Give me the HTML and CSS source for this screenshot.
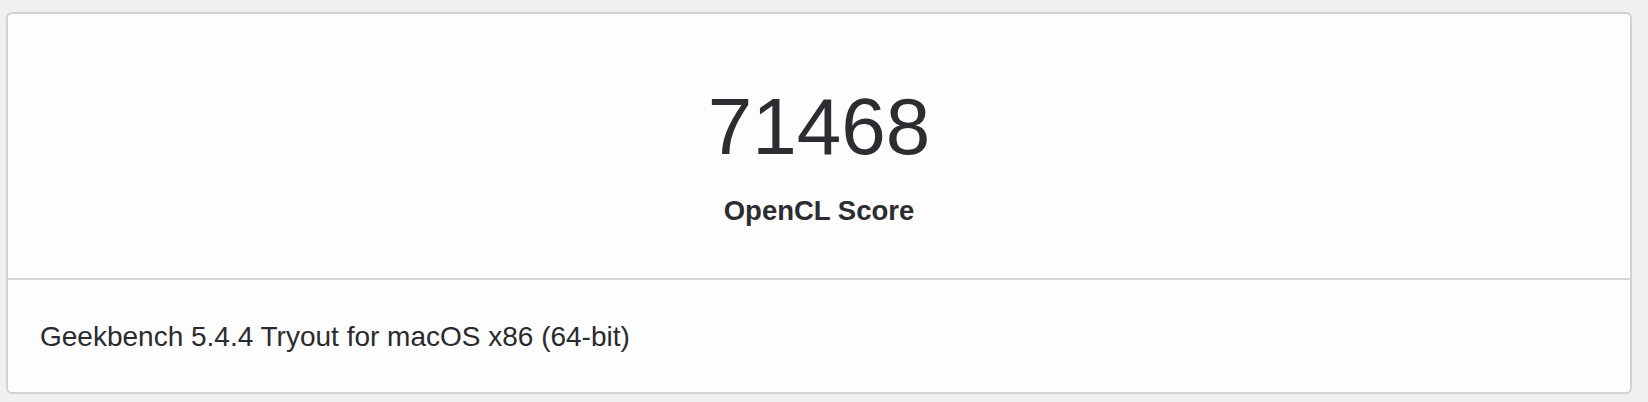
FILE: index.html
```html
<!DOCTYPE html>
<html lang="en">
<head>
<meta charset="utf-8">
<title>Geekbench OpenCL Score</title>
<link rel="stylesheet" href="styles.css">
</head>
<body>
<div class="card">
  <div class="score-section">
    <div class="score">71468</div>
    <div class="score-label">OpenCL Score</div>
  </div>
  <div class="footer">Geekbench 5.4.4 Tryout for macOS x86 (64-bit)</div>
</div>
</body>
</html>
```

FILE: styles.css
```css
html, body {
  margin: 0;
  padding: 0;
  background: #f0f0f0;
}
body {
  font-family: "Liberation Sans", Arial, sans-serif;
  color: #2c2d31;
  padding: 12px 0 0 6px;
}
.card {
  box-sizing: border-box;
  width: 1626px;
  height: 382px;
  background: #fdfdfd;
  border: 2px solid #d2d2d2;
  border-radius: 6px;
  display: flex;
  flex-direction: column;
}
.score-section {
  display: flex;
  flex-direction: column;
  align-items: center;
  padding-top: 73px;
  height: 266px;
  box-sizing: border-box;
  border-bottom: 2px solid #d6d6d6;
}
.score {
  font-size: 80px;
  line-height: 80px;
  font-weight: 400;
}
.score-label {
  margin-top: 30px;
  font-size: 27.5px;
  line-height: 27px;
  font-weight: 700;
}
.footer {
  padding: 43px 0 0 32px;
  font-size: 28px;
  line-height: 28px;
  color: #2a2b2e;
}
```
